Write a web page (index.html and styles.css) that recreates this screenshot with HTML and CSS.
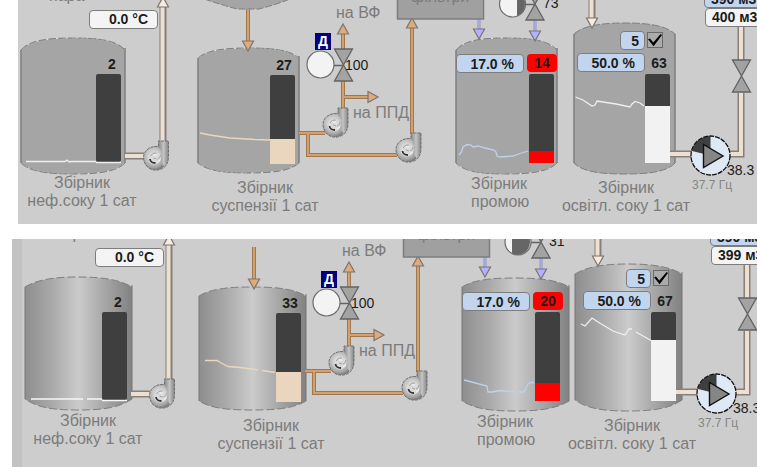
FILE: index.html
```html
<!DOCTYPE html>
<html lang="uk">
<head>
<meta charset="utf-8">
<title>Збірники</title>
<link rel="stylesheet" href="styles.css">
</head>
<body>
<main class="screens">

<section class="panel panel-flat">
<div class="canvas">
<svg class="drawing" width="760" height="230" viewBox="0 0 760 230" aria-hidden="true">
  <defs>
    <linearGradient id="metal">
      <stop offset="0" stop-color="#8e8e8e"/>
      <stop offset=".25" stop-color="#a9a9a9"/>
      <stop offset=".5" stop-color="#cbcbcb"/>
      <stop offset=".75" stop-color="#a6a6a6"/>
      <stop offset="1" stop-color="#828282"/>
    </linearGradient>
    <radialGradient id="casing" cx=".42" cy=".42" r=".6">
      <stop offset="0" stop-color="#e6e6e6"/>
      <stop offset=".5" stop-color="#c6c6c6"/>
      <stop offset=".8" stop-color="#a0a0a0"/>
      <stop offset="1" stop-color="#747474"/>
    </radialGradient>
    <linearGradient id="spout">
      <stop offset="0" stop-color="#8a8a8a"/>
      <stop offset=".5" stop-color="#c4c4c4"/>
      <stop offset="1" stop-color="#858585"/>
    </linearGradient>
    <symbol id="pump" overflow="visible">
      <circle r="12" fill="url(#casing)"/>
      <path d="M3-17H13V-2Q13 5 9 9L5 3Q8-6 3-11Z" fill="url(#spout)"/>
      <path d="M3-11.500V-17H13V-2Q13 8 6 11Q-2 14-8 9Q-14 2-11-5Q-7-12 3-11.500" fill="none" stroke="#6f6f6f" stroke-dasharray="3 1"/>
      <circle cx="-1" cy="0" r="6.500" fill="#dadada"/>
      <path d="M-5.500 1Q-5 5 0 5" fill="none" stroke="#333" stroke-width="1.800"/>
      <path d="M-5-2Q-3-6 1-5M2 1Q5 0 5-3M-2 0L1 1" fill="none" stroke="#a0a0a0"/>
      <path d="M-2-3L1-3M2 4L5 2" stroke="#fafafa"/>
    </symbol>
    <symbol id="valve" overflow="visible">
      <path d="M-9-16H9L0 0L9 16H-9L0 0Z" fill="#a3a3a3" stroke="#636363" stroke-width="1.3"/>
    </symbol>
    <symbol id="arrow" overflow="visible">
      <path d="M0 0L5.500 10H-5.500Z" stroke="#7b7470" stroke-width="1.2"/>
    </symbol>
    <g id="network">
      <g fill="none" stroke="#8a7f78" stroke-width="7">
        <path d="M163 6V142M125 156H144"/>
        <path d="M592 -3V18"/>
        <path d="M741 26V60M741 93V154H728M670 154H692"/>
      </g>
      <g fill="none" stroke="#ece0d3" stroke-width="4">
        <path d="M162.500 6V142M125 156H144"/>
        <path d="M591.500 -3V18"/>
        <path d="M741 26V60M741 93V154H728M670 154H692"/>
      </g>
      <g fill="none" stroke="#a07850" stroke-width="4">
        <path d="M248 9V42M343 33V49M343 81V109M343 97H368M299 133H325M308 133V155H397M412 28V134"/>
      </g>
      <g fill="none" stroke="#d3a06f" stroke-width="2">
        <path d="M248 9V42M343 33V49M343 81V109M343 97H368M299 133H325M308 133V155H397M412 28V134"/>
      </g>
      <path d="M479 19V29M535 20V31" stroke="#8f8fd0" stroke-width="3"/>
      <path d="M479 19V29M535 20V31" stroke="#bdbdff"/>
      <g fill="#dfab7a">
        <use href="#arrow" transform="translate(248 51) rotate(180)"/>
        <use href="#arrow" transform="translate(343 24)"/>
        <use href="#arrow" transform="translate(378 97) rotate(90)"/>
        <use href="#arrow" transform="translate(412 18)"/>
      </g>
      <g fill="#b1b1ff">
        <use href="#arrow" transform="translate(479 39) rotate(180)"/>
        <use href="#arrow" transform="translate(535 41) rotate(180)"/>
      </g>
      <g fill="#f5ebde">
        <use href="#arrow" transform="translate(163 -3)"/>
        <use href="#arrow" transform="translate(592 28) rotate(180)"/>
      </g>
      <rect x="397.500" y="-30" width="86" height="49" fill="#a0a0a0" stroke="#7d7d7d" stroke-width="1.500"/>
      <use href="#pump" x="155.500" y="158"/>
      <use href="#pump" x="335" y="125"/>
      <use href="#pump" x="408" y="150"/>
      <path d="M333 65.500H343M525 4.500H535" stroke="#636363" stroke-width="1.500"/>
      <circle cx="320.500" cy="64.500" r="13.500" fill="#f3f3f3" stroke="#6c6c6c" stroke-width="1.200"/>
      <use href="#valve" x="343.500" y="65"/>
      <use href="#valve" x="535" y="4"/>
      <use href="#valve" x="741.500" y="76"/>
      <circle cx="710.500" cy="155.500" r="19.500" fill="#dfe9f6"/>
      <path d="M710.500 155.500V136A19.500 19.500 0 0 0 692 151Z" fill="#3f3f3f"/>
      <circle cx="710.500" cy="155.500" r="19.500" fill="none" stroke="#111" stroke-width="1.300" stroke-dasharray="5 1"/>
      <path d="M703.500 144.500V167.500L723 156Z" fill="#868686" stroke="#111" stroke-width="1.400"/>
    </g>
    <g id="columns" fill="#3f3f3f">
      <rect x="96" y="74" width="25" height="88" rx="2"/>
      <rect x="270" y="75" width="25" height="89" rx="2"/>
      <rect x="529" y="74" width="25" height="89" rx="2"/>
      <rect x="645" y="74" width="25" height="89" rx="2"/>
    </g>
  </defs>

  <path d="M204 -1Q222 5 237 9H259Q275 5 290 -1Z" fill="#a5a5a5" stroke="#7f7f7f" stroke-dasharray="7 2"/>
  <g fill="#a5a5a5">
    <path d="M21 50C29 41 44 38 73 38S117 41 125 50V163C117 171 102 174 73 174S29 171 21 163Z"/>
    <path d="M198 58C206 51 220 48 249 48S291 51 299 58V163C291 170 277 173 249 173S206 170 198 163Z"/>
    <path d="M456 50C464 41 478 38 506 38S549 41 557 50V163C549 171 534 174 506 174S464 171 456 163Z"/>
    <path d="M574 34C582 27 596 23 625 23S667 27 675 34V163C667 171 653 174 625 174S582 171 574 163Z"/>
  </g>
  <g fill="none" stroke="#e8e8e8" stroke-dasharray="4 5">
    <path d="M21 50C29 41 44 38 73 38S117 41 125 50M125 163C117 171 102 174 73 174S29 171 21 163"/>
    <path d="M198 58C206 51 220 48 249 48S291 51 299 58M299 163C291 170 277 173 249 173S206 170 198 163"/>
    <path d="M456 50C464 41 478 38 506 38S549 41 557 50M557 163C549 171 534 174 506 174S464 171 456 163"/>
  </g>
  <g fill="none" stroke="#7f7f7f" stroke-dasharray="8 2">
    <path d="M21 50C29 41 44 38 73 38S117 41 125 50M125 163C117 171 102 174 73 174S29 171 21 163"/>
    <path d="M198 58C206 51 220 48 249 48S291 51 299 58M299 163C291 170 277 173 249 173S206 170 198 163"/>
    <path d="M456 50C464 41 478 38 506 38S549 41 557 50M557 163C549 171 534 174 506 174S464 171 456 163"/>
    <path d="M574 34C582 27 596 23 625 23S667 27 675 34M675 163C667 171 653 174 625 174S582 171 574 163"/>
  </g>
  <path d="M21 50V163M125 48V163M198 58V163M299 56V163M456 50V163M557 48V163M574 34V163M675 34V163" stroke="#7f7f7f" stroke-width="1.500"/>
  <use href="#network"/>
  <path d="M512.500 -9A13 13 0 0 0 512.500 17H517V-9Z" fill="#f3f3f3"/>
  <path d="M517 -8A13 13 0 0 1 517 16Z" fill="#666"/>
  <circle cx="512.500" cy="4" r="13" fill="none" stroke="#6c6c6c" stroke-width="1.200"/>
  <use href="#columns"/>
  <rect x="270" y="139" width="25" height="25" fill="#ead6bf"/>
  <rect x="529" y="151" width="25" height="12" fill="#f00"/>
  <rect x="645" y="106" width="25" height="57" fill="#f2f2f2"/>
  <g fill="none" stroke-width="1.300">
    <path d="M26 161.500H65L67 160L69 162L71 161.500H96M96 162.500H121" stroke="#efefef"/>
    <path d="M200 133L210 135L230 138L255 139.500L270 140" stroke="#ead6bf"/>
    <path d="M459 155L461.500 152L463 147L467 144.500L471 145L473 147L478 146L485 148L494 150L496 152L497 156L500 157L507 156.500L513 156L520 153.500L528 151" stroke="#bed2ea"/>
    <path d="M575.500 97L583 100L592 106L595 105L597 101L603 102L616 104L630 107L632 104L635 101.500L640 103L644 106" stroke="#efefef"/>
  </g>
</svg>
<span class="name at-steam">пара</span>
<span class="name at-filters">фільтри</span>
<span class="name at-vf">на ВФ</span>
<span class="name at-ppd">на ППД</span>
<output class="box at-temp">0.0 °C</output>
<output class="level at-level1">2</output>
<output class="level at-level2">27</output>
<output class="level alarm at-level3">14</output>
<output class="level at-level4">63</output>
<button class="mode at-mode" type="button">Д</button>
<output class="reading at-valve">100</output>
<output class="reading at-valve2">73</output>
<input class="box setpoint at-set3" type="text" value="17.0 %" aria-label="Завдання, промій">
<input class="box setpoint at-step" type="text" value="5" aria-label="Крок">
<input class="tick at-tick" type="checkbox" checked aria-label="Автомат">
<input class="box setpoint at-set4" type="text" value="50.0 %" aria-label="Завдання, освітлений сік">
<input class="box setpoint flow at-flowset" type="text" value="390 м3" aria-label="Завдання витрати">
<output class="box flow at-flow">400 м3</output>
<output class="reading at-current">38.3</output>
<output class="freq at-freq">37.7 Гц</output>
<p class="name caption at-cap1">Збірник<br>неф.соку 1 сат</p>
<p class="name caption at-cap2">Збірник<br>суспензії 1 сат</p>
<p class="name at-cap3">Збірник<br>промою</p>
<p class="name caption at-cap4">Збірник<br>освітл. соку 1 сат</p>
</div>
</section>

<section class="panel panel-metal">
<div class="canvas">
<svg class="drawing" width="760" height="230" viewBox="0 0 760 230" aria-hidden="true">
  <g fill="url(#metal)">
    <path d="M19 49C31 42 46 39 72 39S114 42 126 49V161C114 169 100 172 72 172S31 169 19 161Z"/>
    <path d="M193 58C205 51 220 49 246 49S288 51 300 58V163C288 170 273 172 246 172S205 170 193 163Z"/>
    <path d="M456 49C468 42 483 40 509 40S551 42 563 49V163C551 170 537 173 509 173S468 170 456 163Z"/>
    <path d="M569 36C581 29 596 26 622 26S664 29 676 36V162C664 170 650 173 622 173S581 170 569 162Z"/>
  </g>
  <g fill="none" stroke="#7f7f7f" stroke-dasharray="8 3">
    <path d="M19 49C31 42 46 39 72 39S114 42 126 49M126 161C114 169 100 172 72 172S31 169 19 161"/>
    <path d="M193 58C205 51 220 49 246 49S288 51 300 58M300 163C288 170 273 172 246 172S205 170 193 163"/>
    <path d="M456 49C468 42 483 40 509 40S551 42 563 49M563 163C551 170 537 173 509 173S468 170 456 163"/>
    <path d="M569 36C581 29 596 26 622 26S664 29 676 36M676 162C664 170 650 173 622 173S581 170 569 162"/>
  </g>
  <path d="M19 49V161M126 47V161M193 58V163M300 56V163M456 49V163M563 47V163M569 36V162M676 34V162" stroke="#777"/>
  <use href="#network"/>
  <circle cx="512" cy="4" r="13" fill="#f3f3f3"/>
  <path d="M506 -8A13 13 0 1 1 506 16Z" fill="#666"/>
  <circle cx="512" cy="4" r="13" fill="none" stroke="#6c6c6c" stroke-width="1.200"/>
  <use href="#columns"/>
  <rect x="270" y="134" width="25" height="30" fill="#ead6bf"/>
  <rect x="529" y="145" width="25" height="18" fill="#f00"/>
  <rect x="645" y="102" width="25" height="61" fill="#f2f2f2"/>
  <g fill="none" stroke-width="1.300">
    <path d="M25 161H77M81 161H96M96 162.500H121" stroke="#f6f6f6"/>
    <path d="M199 122.500H211L216 125.500L222 128.500L234 129.500L246 131L252 132M256 132.500L269 134.500" stroke="#ead6bf"/>
    <path d="M458 142L481 148L482 154L486 154L494 152.500L509 154M513 154H518L522 146L526 144L528 145.500" stroke="#bed2ea"/>
    <path d="M575 86L579 88L586 80L592 84L607 93L619 97L623 91H626M630 94L645 102.500" stroke="#efefef"/>
  </g>
</svg>
<span class="name at-steam">пара</span>
<span class="name at-filters">фільтри</span>
<span class="name at-vf">на ВФ</span>
<span class="name at-ppd">на ППД</span>
<output class="box at-temp">0.0 °C</output>
<output class="level at-level1">2</output>
<output class="level at-level2">33</output>
<output class="level alarm at-level3">20</output>
<output class="level at-level4">67</output>
<button class="mode at-mode" type="button">Д</button>
<output class="reading at-valve">100</output>
<output class="reading at-valve2">31</output>
<input class="box setpoint at-set3" type="text" value="17.0 %" aria-label="Завдання, промій">
<input class="box setpoint at-step" type="text" value="5" aria-label="Крок">
<input class="tick at-tick" type="checkbox" checked aria-label="Автомат">
<input class="box setpoint at-set4" type="text" value="50.0 %" aria-label="Завдання, освітлений сік">
<input class="box setpoint flow at-flowset" type="text" value="390 м3" aria-label="Завдання витрати">
<output class="box flow at-flow">399 м3</output>
<output class="reading at-current">38.3</output>
<output class="freq at-freq">37.7 Гц</output>
<p class="name caption at-cap1">Збірник<br>неф.соку 1 сат</p>
<p class="name caption at-cap2">Збірник<br>суспензії 1 сат</p>
<p class="name at-cap3">Збірник<br>промою</p>
<p class="name caption at-cap4">Збірник<br>освітл. соку 1 сат</p>
</div>
</section>

</main>
</body>
</html>
```
FILE: styles.css
```css
* {
  box-sizing: border-box;
}

body {
  margin: 0;
  background: #fff;
  font: 14px/18px "Liberation Sans", Arial, sans-serif;
  color: #1c1c1c;
}

.screens {
  display: flex;
  flex-direction: column;
  gap: 15px;
  min-height: 100vh;
}

.panel {
  overflow: hidden;
  background: #cdcdcd;
}

.panel-flat {
  margin-left: 18px;
  height: 224px;
}

.panel-metal {
  flex: 1 0 auto;
  height: 228px;
  margin-left: 12px;
  border-left: 10px solid #c2c2c2;
}

/* Free canvas: both screens place their nodes in the same coordinates. */
.canvas {
  position: relative;
  width: 760px;
}

.panel-flat .canvas {
  margin-left: -18px;
}

.panel-metal .canvas {
  margin: -1px 0 0 -16px;
}

.drawing {
  display: block;
}

.name,
.box,
.level,
.reading,
.freq,
.mode,
.tick {
  position: absolute;
  margin: 0;
  white-space: nowrap;
}

.name {
  font-size: 16px;
  color: #7c7c7c;
}

.caption {
  width: 140px;
  text-align: center;
}

.box {
  height: 19px;
  padding: 0 9px;
  border: 1px solid #7d7d7d;
  border-radius: 4px;
  background: #f4f4f4;
  font: bold 14px/17px "Liberation Sans", Arial, sans-serif;
  color: #1c1c1c;
  text-align: right;
}

.setpoint {
  background: #c1d5ee;
}

.flow {
  width: 70px;
  padding: 0 6px;
  text-align: left;
}

.level {
  width: 30px;
  font-weight: bold;
  text-align: center;
}

.alarm {
  border-radius: 4px;
  background: #f00;
}

.freq {
  font-size: 12px;
  color: #858585;
}

.mode {
  width: 16px;
  height: 17px;
  padding: 0;
  border: 0;
  background: #000080;
  font: bold 14px/17px "Liberation Sans", Arial, sans-serif;
  color: #fff;
}

.tick {
  width: 16px;
  height: 16px;
  border: 1px solid #6a6a6a;
  appearance: none;
  background: #ababab;
}

.tick:checked::before {
  content: "";
  display: block;
  height: 14px;
  background: #000;
  clip-path: polygon(0 45%, 14% 40%, 38% 68%, 90% 8%, 100% 14%, 40% 94%);
}

.at-steam { left: 49px; top: -13px; }
.at-filters { left: 411px; top: -12px; }
.at-vf { left: 336px; top: 4px; }
.at-ppd { left: 353px; top: 104px; }
.at-temp { left: 89px; top: 10px; width: 69px; }
.at-level1 { left: 97px; top: 55px; }
.at-level2 { left: 269px; top: 56px; }
.at-level3 { left: 527px; top: 54px; }
.at-level4 { left: 644px; top: 54px; }
.at-mode { left: 315px; top: 33px; }
.at-valve { left: 345px; top: 56px; }
.at-valve2 { left: 543px; top: -6px; }
.at-set3 { left: 456px; top: 54px; width: 68px; }
.at-step { left: 620px; top: 31px; width: 25px; padding: 0 5px; }
.at-tick { left: 647px; top: 32px; }
.at-set4 { left: 577px; top: 53px; width: 68px; }
.at-flowset { left: 704px; top: -11px; }
.at-flow { left: 705px; top: 8px; }
.at-current { left: 727px; top: 161px; }
.at-freq { left: 692px; top: 176px; }
.at-cap1 { left: 12px; top: 174px; }
.at-cap2 { left: 195px; top: 179px; }
.at-cap3 { left: 471px; top: 175px; }
.at-cap4 { left: 556px; top: 179px; }
```
